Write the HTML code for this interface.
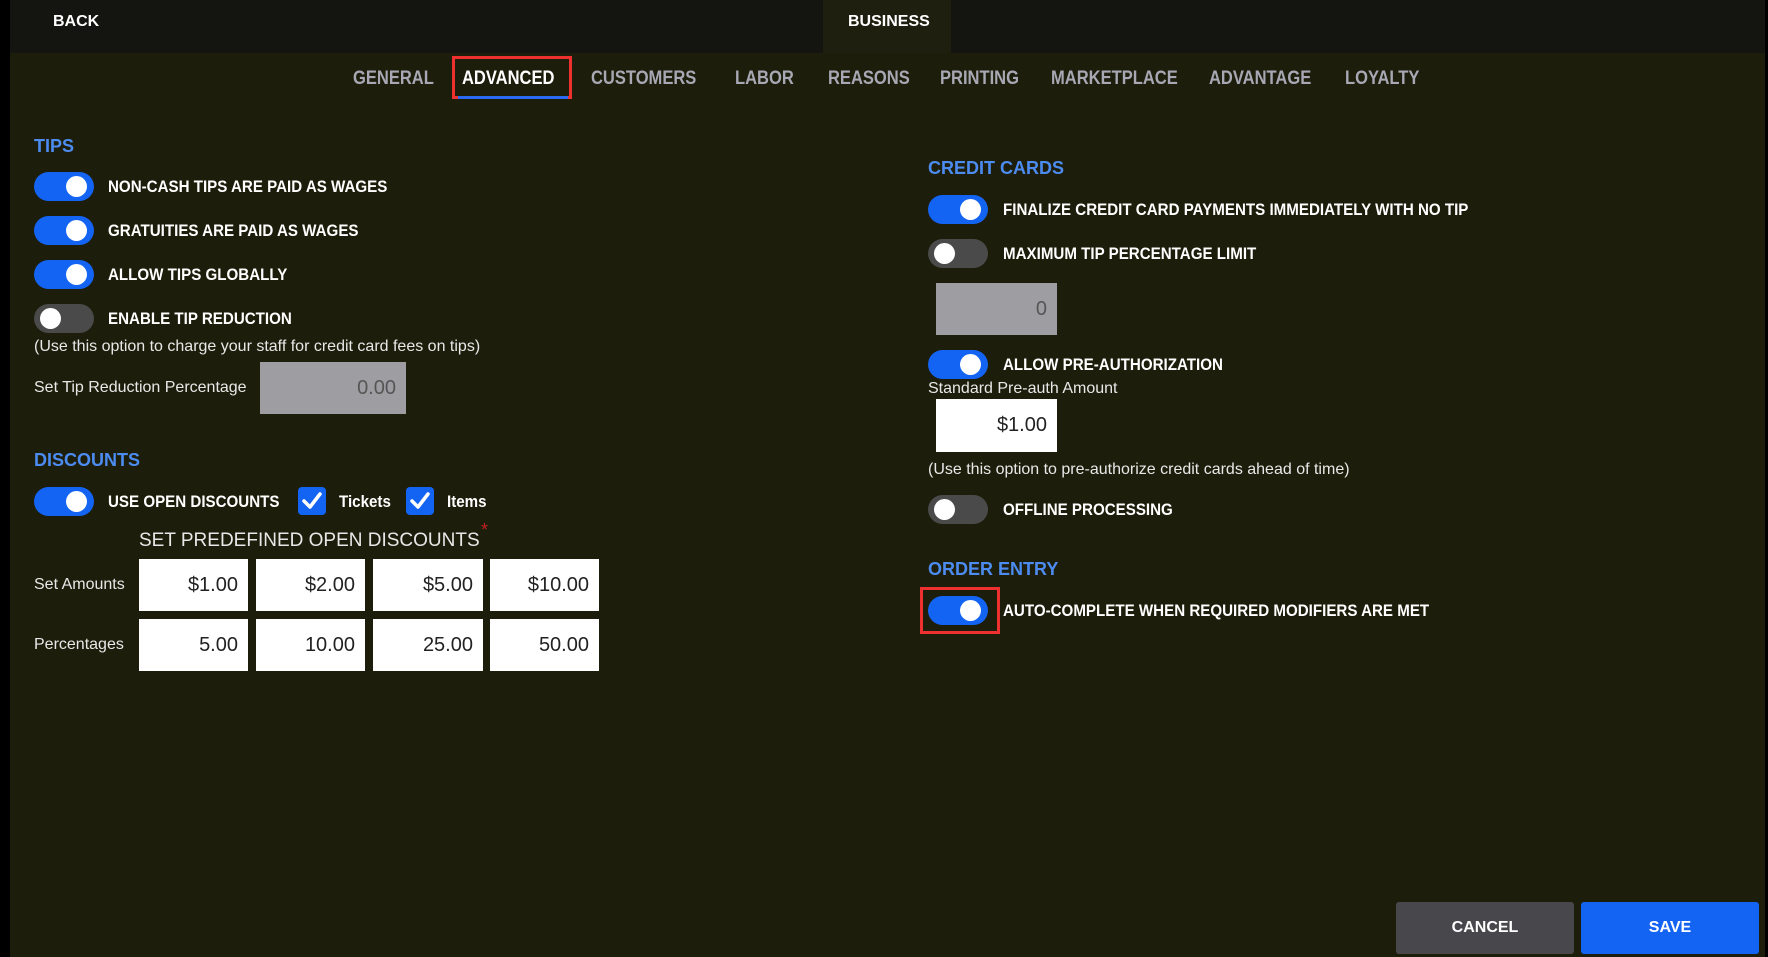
<!DOCTYPE html>
<html><head><meta charset="utf-8"><style>
*{margin:0;padding:0;box-sizing:border-box}
html,body{background:#1d1d0b}
body{width:1768px;height:957px;overflow:hidden;position:relative;font-family:"Liberation Sans",sans-serif;color:#fff}
.hdr{position:absolute;left:10px;top:0;width:1755px;height:53px;background:#141410}
.a{position:absolute;white-space:nowrap}
.b{font-weight:bold;font-size:17px;line-height:20px;transform:scaleX(0.89);transform-origin:0 50%}
.tab{font-weight:bold;font-size:19px;line-height:22px;color:#a8a8b4;top:68px;transform:scaleX(0.87);transform-origin:0 50%}
.h{font-weight:bold;font-size:18px;line-height:20px;color:#4c8cf0}
.r{font-size:16px;line-height:18px;color:#e8e8e8}
.tg{position:absolute;width:60px;height:29px;border-radius:15px;background:#1464f4}
.tg::after{content:"";position:absolute;top:4px;right:7px;width:21px;height:21px;border-radius:50%;background:#fff}
.tg.off{background:#4a4a4a}
.tg.off::after{right:auto;left:6px}
.box{position:absolute;background:#fff;color:#222;font-size:20px;padding-right:10px;display:flex;align-items:center;justify-content:flex-end}
.gray{background:#9e9ea2;color:#555}
.cb{position:absolute;width:28px;height:28px;border-radius:4px;background:#1464f4}
.btn{position:absolute;top:902px;width:178px;height:52px;border-radius:3px;display:flex;align-items:center;justify-content:center;font-weight:bold;font-size:16px}
</style></head><body>
<div class="a" style="left:0;top:0;width:10px;height:957px;background:#000"></div>
<div class="a" style="left:1765px;top:0;width:3px;height:957px;background:#000"></div>
<div class="hdr"></div>
<div class="a" style="left:823px;top:0;width:128px;height:53px;background:#1f1f0f"></div>
<div class="a" style="left:53px;top:13px;font-weight:bold;font-size:16px">BACK</div>
<div class="a" style="left:848px;top:13px;font-weight:bold;font-size:16px">BUSINESS</div>

<div class="a tab" style="left:353px">GENERAL</div>
<div class="a tab" style="left:462px;color:#fff">ADVANCED</div>
<div class="a" style="left:452px;top:56px;width:120px;height:43px;border:3px solid #ee3030"></div>
<div class="a" style="left:458px;top:96px;width:110px;height:3px;background:#2a6af0"></div>
<div class="a tab" style="left:591px">CUSTOMERS</div>
<div class="a tab" style="left:735px">LABOR</div>
<div class="a tab" style="left:828px">REASONS</div>
<div class="a tab" style="left:940px">PRINTING</div>
<div class="a tab" style="left:1051px">MARKETPLACE</div>
<div class="a tab" style="left:1209px">ADVANTAGE</div>
<div class="a tab" style="left:1345px">LOYALTY</div>

<div class="a h" style="left:34px;top:136px">TIPS</div>
<div class="tg" style="left:34px;top:172px"></div><div class="a b" style="left:108px;top:177px">NON-CASH TIPS ARE PAID AS WAGES</div>
<div class="tg" style="left:34px;top:216px"></div><div class="a b" style="left:108px;top:221px">GRATUITIES ARE PAID AS WAGES</div>
<div class="tg" style="left:34px;top:260px"></div><div class="a b" style="left:108px;top:265px">ALLOW TIPS GLOBALLY</div>
<div class="tg off" style="left:34px;top:304px"></div><div class="a b" style="left:108px;top:309px">ENABLE TIP REDUCTION</div>
<div class="a r" style="left:34px;top:338px">(Use this option to charge your staff for credit card fees on tips)</div>
<div class="a r" style="left:34px;top:379px">Set Tip Reduction Percentage</div>
<div class="box gray" style="left:260px;top:362px;width:146px;height:52px">0.00</div>

<div class="a h" style="left:34px;top:450px">DISCOUNTS</div>
<div class="tg" style="left:34px;top:487px"></div><div class="a b" style="left:108px;top:492px">USE OPEN DISCOUNTS</div>
<div class="cb" style="left:298px;top:487px"><svg width="28" height="28"><path d="M6 14l6 6 10-13" stroke="#fff" stroke-width="3.5" fill="none" stroke-linecap="round" stroke-linejoin="round"/></svg></div>
<div class="a b" style="left:339px;top:492px">Tickets</div>
<div class="cb" style="left:406px;top:487px"><svg width="28" height="28"><path d="M6 14l6 6 10-13" stroke="#fff" stroke-width="3.5" fill="none" stroke-linecap="round" stroke-linejoin="round"/></svg></div>
<div class="a b" style="left:447px;top:492px">Items</div>
<div class="a" style="left:139px;top:530px;font-size:19px;color:#e8e8e8">SET PREDEFINED OPEN DISCOUNTS</div>
<div class="a" style="left:481px;top:520px;color:#c02020;font-size:18px">*</div>
<div class="a r" style="left:34px;top:576px">Set Amounts</div>
<div class="a r" style="left:34px;top:636px">Percentages</div>
<div class="box" style="left:139px;top:559px;width:109px;height:52px">$1.00</div>
<div class="box" style="left:256px;top:559px;width:109px;height:52px">$2.00</div>
<div class="box" style="left:373px;top:559px;width:110px;height:52px">$5.00</div>
<div class="box" style="left:490px;top:559px;width:109px;height:52px">$10.00</div>
<div class="box" style="left:139px;top:619px;width:109px;height:52px">5.00</div>
<div class="box" style="left:256px;top:619px;width:109px;height:52px">10.00</div>
<div class="box" style="left:373px;top:619px;width:110px;height:52px">25.00</div>
<div class="box" style="left:490px;top:619px;width:109px;height:52px">50.00</div>

<div class="a h" style="left:928px;top:158px">CREDIT CARDS</div>
<div class="tg" style="left:928px;top:195px"></div><div class="a b" style="left:1003px;top:200px">FINALIZE CREDIT CARD PAYMENTS IMMEDIATELY WITH NO TIP</div>
<div class="tg off" style="left:928px;top:239px"></div><div class="a b" style="left:1003px;top:244px">MAXIMUM TIP PERCENTAGE LIMIT</div>
<div class="box gray" style="left:936px;top:283px;width:121px;height:52px">0</div>
<div class="tg" style="left:928px;top:350px"></div><div class="a b" style="left:1003px;top:355px">ALLOW PRE-AUTHORIZATION</div>
<div class="a r" style="left:928px;top:380px">Standard Pre-auth Amount</div>
<div class="box" style="left:936px;top:399px;width:121px;height:53px">$1.00</div>
<div class="a r" style="left:928px;top:461px">(Use this option to pre-authorize credit cards ahead of time)</div>
<div class="tg off" style="left:928px;top:495px"></div><div class="a b" style="left:1003px;top:500px">OFFLINE PROCESSING</div>
<div class="a h" style="left:928px;top:559px">ORDER ENTRY</div>
<div class="a" style="left:920px;top:587px;width:80px;height:47px;border:3px solid #ee3030"></div>
<div class="tg" style="left:928px;top:596px"></div><div class="a b" style="left:1003px;top:601px">AUTO-COMPLETE WHEN REQUIRED MODIFIERS ARE MET</div>

<div class="btn" style="left:1396px;background:#48484c">CANCEL</div>
<div class="btn" style="left:1581px;background:#1464f4">SAVE</div>
</body></html>
